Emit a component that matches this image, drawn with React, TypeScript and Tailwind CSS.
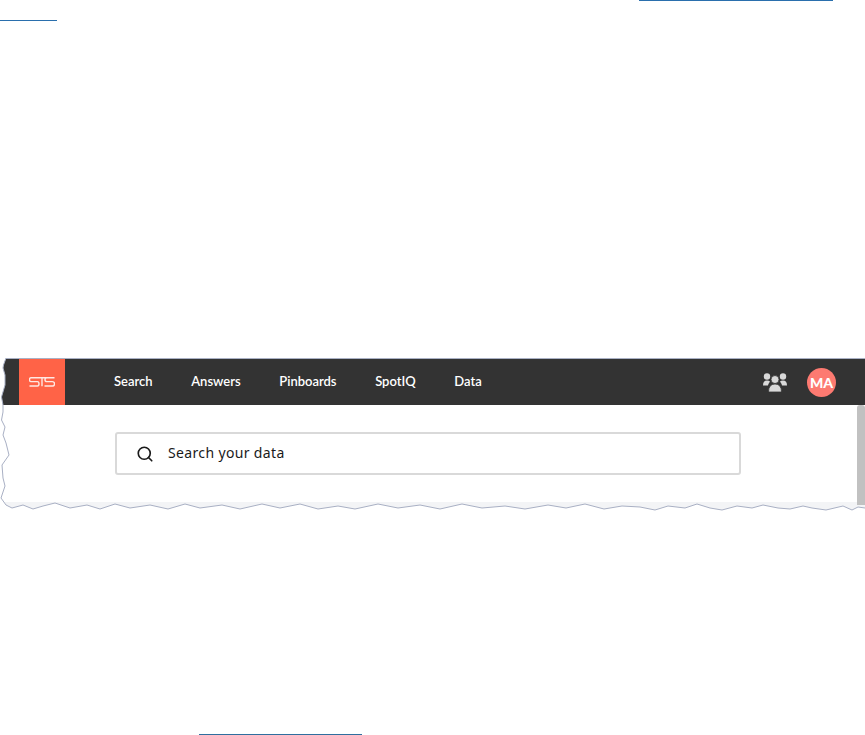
import React from 'react';
import { Search } from 'lucide-react';

const navItems = ['Search', 'Answers', 'Pinboards', 'SpotIQ', 'Data'];

// torn paper edge of the screenshot, in figure coordinates (figure starts at y=358)
const tornEdge =
  'M6,0 L3.5,7 L3,10 L5,17 L5,27 L1.5,39 L3,47 L3,54 L1.5,62 L5,69 L3,77 L6,85 L9,97 L2,107 L3,120 L5,128 L1,140 L6,147 L12,150 L23,147 L33,151 L43,148 L55,145 L70,150 L87,147 L100,151 L115,146 L130,150 L150,147 L168,151 L185,146 L200,150 L222,147 L240,151 L262,146 L280,150 L300,146 L318,151 L338,148 L355,151 L378,146 L398,150 L420,147 L440,151 L462,146 L482,150 L505,148 L525,151 L548,147 L566,150 L585,146 L604,151 L622,148 L640,149 L655,152 L668,148 L685,150 L697,146 L710,150 L722,152 L737,148 L752,150 L763,147 L778,150 L790,151 L803,148 L812,150 L826,152 L843,148 L852,152 L858,149 L865,150';

const App: React.FC = () => {
  return (
    <div className="flex h-[735px] w-[865px] flex-col overflow-hidden bg-white font-['Lato',sans-serif]">
      <div className="ml-[639px] h-px w-[194px] bg-[#2a6fad]" />
      <div className="mt-[19px] h-px w-[57px] bg-[#2a6fad]" />

      <div className="relative mt-[337px] h-[152px] w-full border-t border-[#a9b0c4]">
        <div className="flex h-[46px] items-center bg-[#333333]">
          <div className="ml-[19px] flex h-full w-[46px] items-center justify-center bg-[#ff6347]">
            <svg width="26" height="10" viewBox="0 0 26 10" fill="none" stroke="#ffe9e4" strokeWidth="1.4">
              <path d="M9.500 .8H2Q.5 .8 .5 2.700 .5 4.600 2 4.600H8.500Q10 4.600 10 6.800 10 9 8.500 9H.5M9.500 .8H18M13 .8V9.200M25.500 .8H18Q16 .8 16 2.700 16 4.600 18 4.600H23.500Q25.500 4.600 25.500 6.800 25.500 9 23.500 9H15.500" />
            </svg>
          </div>
          <nav className="ml-[49px] flex gap-[38.6px] text-[13px] font-semibold text-white">
            {navItems.map((item) => (
              <span key={item}>{item}</span>
            ))}
          </nav>
          <div className="ml-auto mr-[29px] flex items-center gap-[20px]">
            <svg width="24" height="19" viewBox="0 0 24 19" fill="#d9d9d9">
              <circle cx="4" cy="3.500" r="3.200" />
              <circle cx="20" cy="3.500" r="3.200" />
              <path d="M0 12.500Q0 7.500 4 7.500 6 7.500 7 8.500 5.500 10.500 5 12.500ZM24 12.500Q24 7.500 20 7.500 18 7.500 17 8.500 18.500 10.500 19 12.500Z" />
              <circle cx="12" cy="6.500" r="4" stroke="#333333" strokeWidth="0.8" />
              <path d="M5.500 19Q5.500 11 12 11 18.500 11 18.500 19Z" stroke="#333333" strokeWidth="0.8" />
            </svg>
            <div className="flex h-[29px] w-[29px] items-center justify-center rounded-full bg-[#fd7a71] text-[14px] font-black text-white">
              MA
            </div>
          </div>
        </div>

        <div className="flex h-[105px] bg-[linear-gradient(#ffffff_97px,#f3f4f6_97px)]">
          <div className="ml-[115px] mt-[27px] flex h-[43px] w-[626px] items-center rounded-[3px] border-2 border-[#d9d9d9] bg-white pl-[19px]">
            <Search size={18} strokeWidth={2.2} className="text-[#1a1a1a]" />
            <span className="ml-[14px] mb-[2px] font-['Noto_Sans',sans-serif] text-[14px] tracking-[0.35px] text-[#1a1a1a]">
              Search your data
            </span>
          </div>
          <div className="ml-auto h-[100px] w-[8px] rounded-t-[3px] bg-[#c1c1c1]" />
        </div>

        <svg className="absolute left-0 top-[-1px]" width="865" height="160" viewBox="0 0 865 160" fill="none">
          <path d={`${tornEdge} L865,160 L0,160 L0,0 Z`} fill="#ffffff" />
          <path d={tornEdge} stroke="#a9b0c4" strokeWidth="1" />
        </svg>
      </div>

      <div className="ml-[199px] mt-auto h-px w-[163px] bg-[#2f6f9f]" />
    </div>
  );
};

export default App;
